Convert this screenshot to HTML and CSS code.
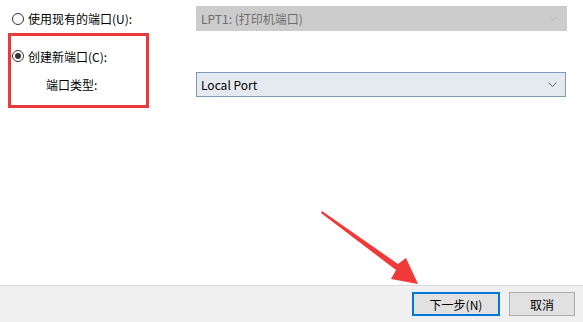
FILE: index.html
```html
<!DOCTYPE html>
<html lang="zh-CN">
<head>
  <meta charset="UTF-8">
  <title>添加打印机端口</title>
  <link rel="stylesheet" href="styles.css">
</head>
<body>
  <div class="page">
    <div class="form">
      <div class="row row-first">
        <label class="opt">
          <span class="radio"></span>
          <span>使用现有的端口(U):</span>
        </label>
        <div class="combo disabled">
          <span>LPT1: (打印机端口)</span>
          <svg class="chev" width="9" height="5" viewBox="0 0 9 5"><path d="M0.5 0.5 L4.5 4.5 L8.5 0.5" fill="none" stroke="currentColor"/></svg>
        </div>
      </div>

      <div class="row row-second">
        <label class="opt">
          <span class="radio checked"></span>
          <span>创建新端口(C):</span>
        </label>
      </div>

      <div class="row row-third">
        <span class="sublabel">端口类型:</span>
        <div class="combo active">
          <span>Local Port</span>
          <svg class="chev" width="9" height="5" viewBox="0 0 9 5"><path d="M0.5 0.5 L4.5 4.5 L8.5 0.5" fill="none" stroke="currentColor"/></svg>
        </div>
      </div>

      <div class="highlight"></div>
    </div>

    <div class="footer">
      <button class="btn primary">下一步(N)</button>
      <button class="btn">取消</button>
    </div>

    <svg class="arrow" width="583" height="322" viewBox="0 0 583 322">
      <polygon points="322,211 398,264 406,258 418,284 391,279 396,270 321,213" fill="#f03a3a"/>
    </svg>
  </div>
</body>
</html>
```

FILE: styles.css
```css
body {
  margin: 0;
  background: #ffffff;
  font-family: "Noto Sans CJK SC", sans-serif;
  font-size: 12px;
  color: #000000;
}

.page {
  position: relative;
  width: 583px;
  height: 322px;
  display: flex;
  flex-direction: column;
}

.form {
  position: relative;
  flex: 1;
  padding: 0 16px 0 12px;
}

.row {
  display: flex;
  align-items: center;
  height: 25px;
}

.row-first {
  margin-top: 6px;
}

.row-second {
  margin-top: 13px;
  height: 24px;
}

.row-third {
  margin-top: 4px;
}

.opt {
  display: flex;
  align-items: center;
  gap: 4px;
  width: 184px;
}

.radio {
  width: 12px;
  height: 12px;
  box-sizing: border-box;
  border: 1px solid #333333;
  border-radius: 50%;
  background: #ffffff;
  display: flex;
  align-items: center;
  justify-content: center;
}

.radio.checked::after {
  content: "";
  width: 6px;
  height: 6px;
  border-radius: 50%;
  background: #333333;
}

.sublabel {
  width: 150px;
  padding-left: 34px;
}

.combo {
  box-sizing: border-box;
  width: 371px;
  height: 25px;
  display: flex;
  align-items: center;
  justify-content: space-between;
  padding: 0 8px 0 4px;
}

.combo.disabled {
  background: #cccccc;
  border: 1px solid #cccccc;
  color: #6d6d6d;
}

.combo.disabled .chev {
  color: #b8b8b8;
}

.combo.active {
  width: 370px;
  background: #e5eaf1;
  border: 1px solid #7f9ab8;
  color: #000000;
}

.combo.active .chev {
  color: #606060;
}

.highlight {
  position: absolute;
  left: 8px;
  top: 33px;
  width: 141px;
  height: 75px;
  box-sizing: border-box;
  border: 3px solid #e8393e;
}

.footer {
  height: 37px;
  box-sizing: border-box;
  border-top: 1px solid #dadada;
  background: #f0f0f0;
  display: flex;
  justify-content: flex-end;
  align-items: flex-start;
  gap: 9px;
  padding: 6px 8px 0 0;
}

.btn {
  height: 24px;
  width: 66px;
  box-sizing: border-box;
  background: #e1e1e1;
  border: 1px solid #adadad;
  font-family: "Noto Sans CJK SC", sans-serif;
  font-size: 12px;
  color: #000000;
  padding: 0;
}

.btn.primary {
  width: 88px;
  border: 2px solid #0078d7;
}

.arrow {
  position: absolute;
  left: 0;
  top: 0;
  pointer-events: none;
}
```
